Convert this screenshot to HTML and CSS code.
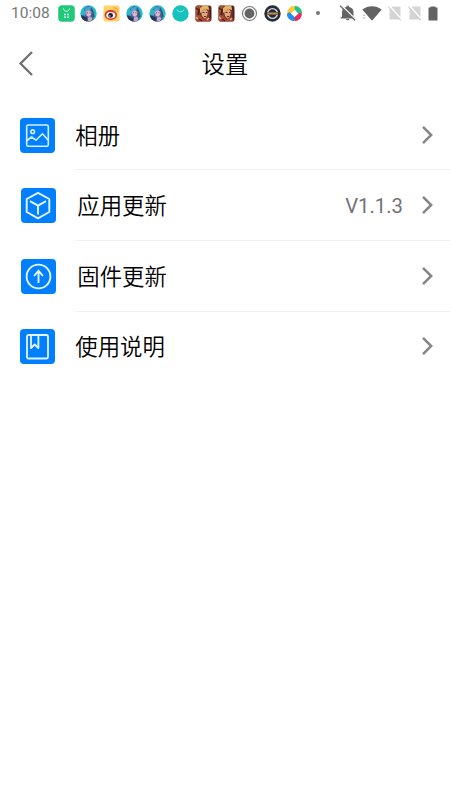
FILE: index.html
```html
<!DOCTYPE html>
<html lang="zh-CN">
<head>
  <meta charset="UTF-8">
  <meta name="viewport" content="width=device-width, initial-scale=1.0">
  <title>设置</title>
  <link rel="stylesheet" href="styles.css">
</head>
<body>

  <!-- shared shapes -->
  <svg class="defs" width="0" height="0">
    <defs>
      <clipPath id="round"><circle cx="8.5" cy="8.5" r="8.2"/></clipPath>
      <clipPath id="square"><rect x=".5" y=".5" width="16" height="16" rx="2"/></clipPath>
    </defs>
    <symbol id="girl" viewBox="0 0 17 17">
      <g clip-path="url(#round)">
        <rect width="17" height="17" fill="#25bcc5"/>
        <path d="M2 14 4 9 4 4 8 1 12 3 13 8 14 12 12 17H4z" fill="#45608f"/>
        <path d="M4 6 6 2.500 10 2 12 4 9 5 6 8 4 13z" fill="#4ba3d3"/>
        <path d="M6 7 9 5 11.500 7 11 10 9 12 6.500 10.500z" fill="#dfb5cb"/>
        <path d="M8 12.500 11 11.500 12.500 14 10 17 8 16z" fill="#cda5c0"/>
        <path d="M1 10 4 11 7 13 7 17H2z" fill="#2e345a"/>
        <path d="M7 7.800h1M9.500 7.800h1" stroke="#594667" stroke-width=".9"/>
        <path d="M11 3 13 7 14 12" stroke="#345484" stroke-width="1.300" fill="none"/>
      </g>
    </symbol>
    <symbol id="hero" viewBox="0 0 17 17">
      <g clip-path="url(#square)">
        <rect width="17" height="17" fill="#7b3428"/>
        <path d="M0 0H6L3 7 5 17H0z" fill="#a65335"/>
        <path d="M5 3 9 0 14 1 14 5 11 4 8 5 5 8z" fill="#e3b562"/>
        <path d="M6 6 11 4 13 7 12 11 10 14 7 11z" fill="#e0a57d"/>
        <path d="M7.500 7.500h2M11 7.500h1.500M9 11.500h2" stroke="#632e27" stroke-width="1.100"/>
        <path d="M1 12 5 10 9 15 12 12 16 17H1z" fill="#ab4937"/>
        <path d="M1 3 4 5 3 10M14 1 15.500 6V13M4 14 7 16" stroke="#3c202a" stroke-width="1.500" fill="none"/>
        <path d="M1 12 3 14M12 15 14 13" stroke="#e7b78b" stroke-width="1.300"/>
      </g>
    </symbol>
    <symbol id="no-sim" viewBox="0 0 14 16">
      <path d="M4.500 1.500H12.500V14.500H1.500V4.500z" fill="#d5d5d5"/>
      <path d="M1 .5 14 15" stroke="#fff" stroke-width="1.700"/>
      <path d="M.3 1.500 12.800 15.300" stroke="#cecece" stroke-width="1.100"/>
    </symbol>
    <symbol id="chevron" viewBox="0 0 12 20">
      <path d="M2 1.800 10.200 10 2 18.200" fill="none" stroke="#858585" stroke-width="2.500"/>
    </symbol>
  </svg>

  <div class="status-bar">
    <span class="time">10:08</span>
    <div class="apps">
      <svg viewBox="0 0 17 17">
        <rect x=".2" y=".2" width="16.600" height="16.600" rx="4" fill="#20c879"/>
        <path d="M5.500 3.500C6 7.300 11 7.300 11.500 3.500" fill="none" stroke="#e5fff2" stroke-width="1"/>
        <path d="M6 9.500h2M9 9.500h2M6 12.200h2M9 12.200h2" stroke="#d8ffea" stroke-width="1.600"/>
      </svg>
      <svg><use href="#girl"/></svg>
      <svg viewBox="0 0 17 17">
        <rect x=".5" y=".5" width="16" height="16" rx="2" fill="#ffd466"/>
        <ellipse cx="7.800" cy="10" rx="6.200" ry="4.900" fill="#dc3030"/>
        <ellipse cx="7.800" cy="10.300" rx="4.500" ry="3.200" fill="#fff"/>
        <circle cx="7.600" cy="10.400" r="2.400" fill="#221b1e"/>
        <circle cx="6.900" cy="10.900" r=".7" fill="#fff"/>
        <path d="M10.500 3C13.500 2.500 15 4.500 14.300 7M10.500 5.200C12 5 12.500 6 12.300 7" fill="none" stroke="#eda43a" stroke-width="1.100"/>
      </svg>
      <svg><use href="#girl"/></svg>
      <svg><use href="#girl"/></svg>
      <svg viewBox="0 0 17 17">
        <circle cx="8.500" cy="8.500" r="8.200" fill="#17c1bd"/>
        <path d="M5 4.500C5.800 7.500 11.200 7.500 12 4.500" fill="none" stroke="#a5eee8" stroke-width=".9"/>
      </svg>
      <svg><use href="#hero"/></svg>
      <svg><use href="#hero"/></svg>
      <svg viewBox="0 0 17 17">
        <circle cx="8.500" cy="8.500" r="7" fill="none" stroke="#777" stroke-width="1.100"/>
        <circle cx="8.500" cy="8.500" r="4.900" fill="#656565"/>
      </svg>
      <svg viewBox="0 0 17 17">
        <circle cx="8.500" cy="8.500" r="8.200" fill="#252d3b"/>
        <circle cx="8.500" cy="8.500" r="4.900" fill="none" stroke="#d8dadd" stroke-width="1.400"/>
        <path d="M2 7H15V10H2z" fill="#282d35"/>
        <path d="M3 8.500H14" stroke="#bd8f48" stroke-width="2"/>
      </svg>
      <svg viewBox="0 0 17 17">
        <path d="M1 8A7.800 7.800 0 0 1 8.500 .8L10 3.500 3.800 9.500z" fill="#ffc936"/>
        <path d="M9 .8A7.700 7.700 0 0 1 16.200 8L13.500 10 8.500 4.500z" fill="#20c584"/>
        <path d="M16 8.500A7.700 7.700 0 0 1 9 16.200L7 13.500 13.200 8z" fill="#ed2962"/>
        <path d="M8 16.200A7.700 7.700 0 0 1 .8 9L3.500 7 9 12.500z" fill="#238df2"/>
      </svg>
    </div>
    <span class="dot"></span>
    <div class="system">
      <svg class="bell" viewBox="0 0 18 16">
        <path d="M3 12V7C3 4 5 2.300 7.500 2V.8H10V2C12.500 2.300 14.500 4 14.500 7V11L16 12.500V13.500H1.500V12.500zM7 14H10.500C10.300 15.800 7.200 15.800 7 14z" fill="#636363"/>
        <path d="M2.200 .3 17 14.500" stroke="#fff" stroke-width="1.300"/>
        <path d="M1 .8 16 15.300" stroke="#696969" stroke-width="1.300"/>
      </svg>
      <svg class="wifi" viewBox="0 0 20 16">
        <path d="M.3 4.500C6 0 14 0 19.700 4.500L10.500 15.200 9.500 15.200z" fill="#636363"/>
        <path d="M.7 11 2 9.300 3.300 11zM.7 12.500 2 14.300 3.300 12.500z" fill="#b5b5b5"/>
      </svg>
      <svg class="sim"><use href="#no-sim"/></svg>
      <svg class="sim"><use href="#no-sim"/></svg>
      <svg class="battery" viewBox="0 0 10 15"><path d="M.5 1.500H2.500V.5H7.500V1.500H9.500V14.500H.5z" fill="#636363"/></svg>
    </div>
  </div>

  <header class="nav">
    <svg class="back" viewBox="0 0 16 26"><path d="M14 2 2.500 13.500 14 25" fill="none" stroke="#707070" stroke-width="2.300"/></svg>
    <h1>设置</h1>
  </header>

  <div class="list">
    <div class="item">
      <svg class="icon" viewBox="0 0 35 35">
        <rect width="35" height="35" rx="4" fill="#007fff"/>
        <g fill="none" stroke="#d8efff" stroke-width="1.600" stroke-linejoin="round">
          <rect x="6.700" y="7" width="21.600" height="21.300" rx="1.500"/>
          <circle cx="12.700" cy="13.700" r="1.800"/>
          <path d="M7 22.500 11.500 19 16 22.200 22.500 15.800 28 22"/>
        </g>
      </svg>
      <span class="label">相册</span>
      <svg class="arrow"><use href="#chevron"/></svg>
    </div>
    <div class="item shifted">
      <svg class="icon" viewBox="0 0 35 35">
        <rect width="35" height="35" rx="4" fill="#007fff"/>
        <path d="M17 4.800 28.300 11V24L17 30.300 5.700 24V11zM9 13.200 17 17.700 25 13.200M17 17.700V26.500" fill="none" stroke="#e5f5ff" stroke-width="1.900" stroke-linejoin="round"/>
      </svg>
      <span class="label">应用更新</span>
      <span class="value">V1.1.3</span>
      <svg class="arrow"><use href="#chevron"/></svg>
    </div>
    <div class="item shifted">
      <svg class="icon" viewBox="0 0 35 35">
        <rect width="35" height="35" rx="4" fill="#007fff"/>
        <g fill="none" stroke="#e5f5ff" stroke-width="1.900">
          <circle cx="17.500" cy="17.500" r="11.900"/>
          <path d="M17.500 24V12M13 17 17.500 11.800 22 17"/>
        </g>
      </svg>
      <span class="label">固件更新</span>
      <svg class="arrow"><use href="#chevron"/></svg>
    </div>
    <div class="item">
      <svg class="icon" viewBox="0 0 35 35">
        <rect width="35" height="35" rx="4" fill="#007fff"/>
        <g fill="none" stroke="#e5f5ff" stroke-width="1.800" stroke-linejoin="round">
          <rect x="7" y="6" width="21" height="23.500" rx="1.500"/>
          <path d="M11 6V19L14.700 15.500 18.400 19V6"/>
        </g>
      </svg>
      <span class="label">使用说明</span>
      <svg class="arrow"><use href="#chevron"/></svg>
    </div>
  </div>

</body>
</html>
```
FILE: styles.css
```css
* {
  box-sizing: border-box;
}
body {
  margin: 0;
  background: #fff;
  color: #000;
  font-family: Roboto, "Noto Sans CJK SC", sans-serif;
}
svg {
  display: block;
  flex-shrink: 0;
}
.defs {
  position: absolute;
}
.status-bar {
  display: flex;
  align-items: center;
  height: 26px;
  padding-left: 11px;
}
.time {
  width: 46.500px;
  padding-top: 1px;
  font-size: 15.500px;
  line-height: 25px;
  color: #777;
}
.apps {
  display: flex;
  gap: 5.900px;
}
.apps svg {
  width: 17px;
  height: 17px;
}
.dot {
  width: 4px;
  height: 4px;
  margin-left: 13px;
  border-radius: 50%;
  background: #777;
}
.system {
  display: flex;
  align-items: center;
  margin-left: 19px;
}
.bell {
  width: 18px;
  height: 16px;
}
.wifi {
  width: 20px;
  height: 16px;
  margin: 0 6px 0 5px;
}
.sim {
  width: 14px;
  height: 16px;
  margin-right: 6px;
}
.battery {
  width: 10px;
  height: 15px;
}
.nav {
  display: flex;
  align-items: center;
  height: 74px;
  padding: 0 18px;
}
.back {
  width: 16px;
  height: 26px;
}
.nav h1 {
  flex: 1;
  margin: 0 16px 0 0;
  padding-top: 4px;
  font-size: 23.400px;
  font-weight: 350;
  line-height: 34px;
  text-align: center;
}
.list {
  display: grid;
  grid-template-rows: 70px 71px 71px 68px;
}
.item {
  display: flex;
  align-items: center;
  padding: 0 17px 0 20px;
  /* divider starts at the label */
  background: linear-gradient(#f0f0f0, #f0f0f0) left 75px bottom 0 / 100% 1px no-repeat;
}
.item:last-child {
  background: none;
}
.item.shifted {
  padding-left: 21px;
  padding-bottom: 1px;
}
.icon {
  width: 35px;
  height: 35px;
}
.label {
  flex: 1;
  margin-left: 20.300px;
  padding-top: 1px;
  font-size: 22.400px;
  font-weight: 350;
  line-height: 34px;
}
.shifted .label {
  margin-left: 21.300px;
  padding-top: 2px;
}
.value {
  margin-right: 18px;
  padding-top: 1px;
  font-size: 20.300px;
  color: #737373;
}
.arrow {
  width: 12px;
  height: 20px;
}
```
